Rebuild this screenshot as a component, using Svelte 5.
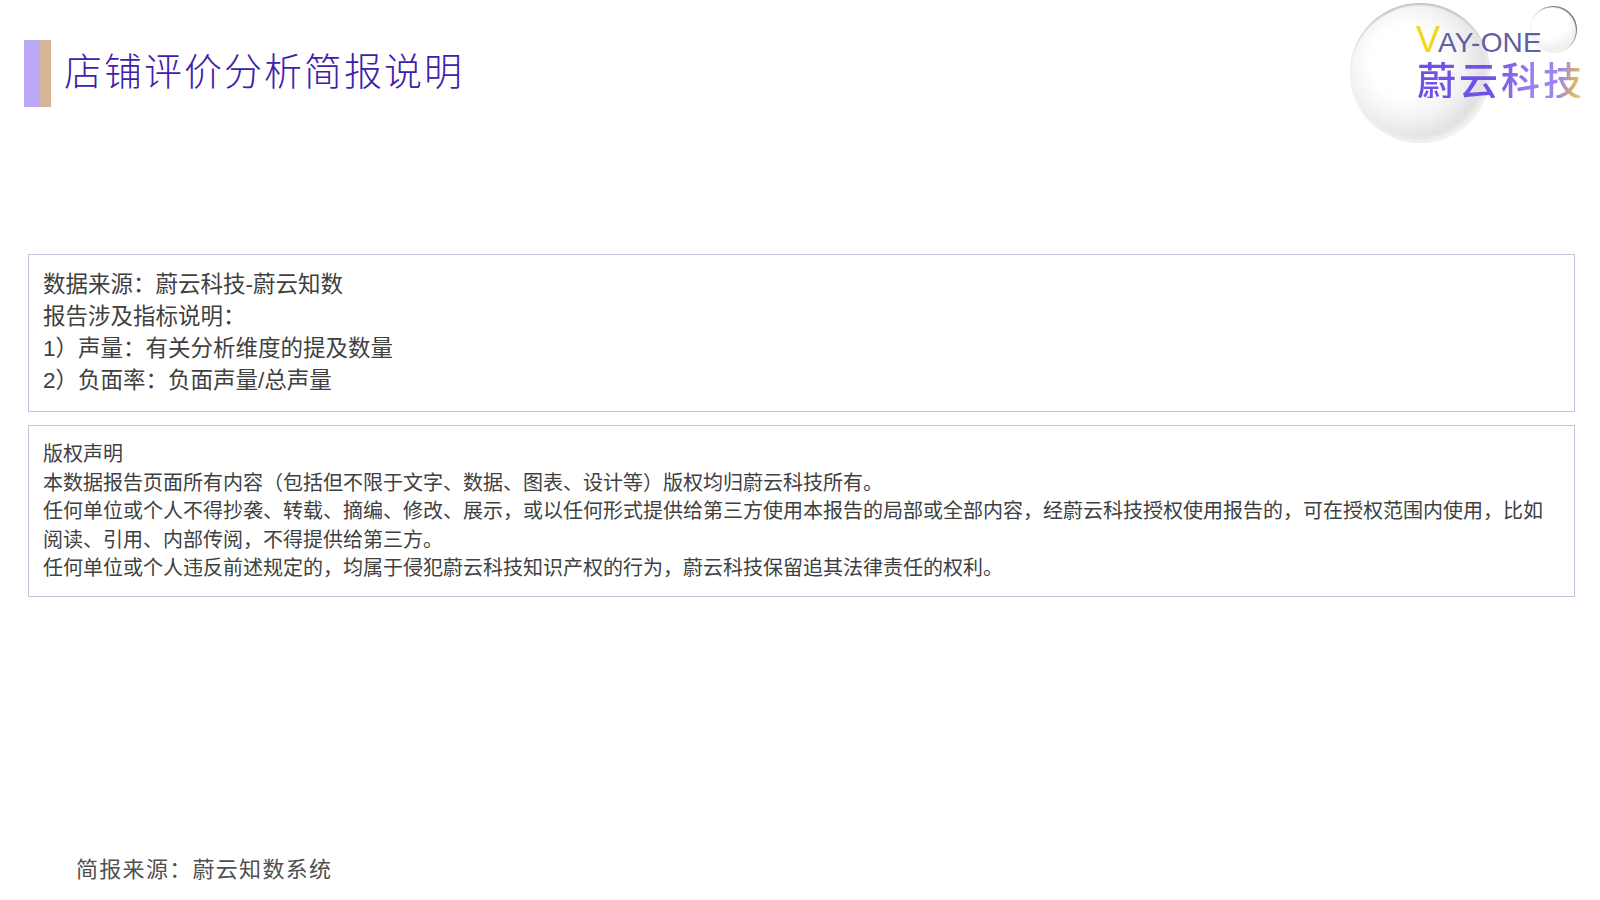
<script>
  const sourceLines = [
    "数据来源：蔚云科技-蔚云知数",
    "报告涉及指标说明：",
    "1）声量：有关分析维度的提及数量",
    "2）负面率：负面声量/总声量",
  ];

  const copyrightLines = [
    "版权声明",
    "本数据报告页面所有内容（包括但不限于文字、数据、图表、设计等）版权均归蔚云科技所有。",
    "任何单位或个人不得抄袭、转载、摘编、修改、展示，或以任何形式提供给第三方使用本报告的局部或全部内容，经蔚云科技授权使用报告的，可在授权范围内使用，比如阅读、引用、内部传阅，不得提供给第三方。",
    "任何单位或个人违反前述规定的，均属于侵犯蔚云科技知识产权的行为，蔚云科技保留追其法律责任的权利。",
  ];
</script>

<div class="page">
  <header class="header">
    <div class="title-wrap">
      <div class="marker"></div>
      <h1 class="title">店铺评价分析简报说明</h1>
    </div>
    <div class="logo">
      <div class="ball big"></div>
      <div class="ball small"></div>
      <div class="logo-en"><span class="v">V</span>AY-ONE</div>
      <div class="logo-cn">蔚云科技</div>
    </div>
  </header>

  <section class="box source">
    {#each sourceLines as line}
      <p>{line}</p>
    {/each}
  </section>

  <section class="box copyright">
    {#each copyrightLines as line}
      <p>{line}</p>
    {/each}
  </section>

  <footer class="footer">简报来源：蔚云知数系统</footer>
</div>

<style>
  :global(body) {
    margin: 0;
    background: #fff;
  }

  .page {
    display: flex;
    flex-direction: column;
    box-sizing: border-box;
    width: 1600px;
    height: 900px;
    padding: 40px 25px 0 28px;
    overflow: hidden;
    font-family: "Liberation Sans", "Noto Sans CJK SC", sans-serif;
    color: #404040;
  }

  .header {
    position: relative;
    height: 67px;
  }

  .title-wrap {
    display: flex;
    align-items: center;
    margin-left: -4px;
  }

  .marker {
    width: 27px;
    height: 67px;
    background: linear-gradient(to right, #bba8f6 0 16px, #d5b595 16px);
  }

  .title {
    margin: -10px 0 0 13px;
    font-family: "Noto Sans CJK SC", sans-serif;
    font-size: 38px;
    font-weight: 300;
    letter-spacing: 2px;
    line-height: 67px;
    color: #3f20ad;
  }

  .logo {
    position: absolute;
    top: -40px;
    right: -25px;
    width: 250px;
    height: 145px;
  }

  .ball {
    position: absolute;
    border-radius: 50%;
  }

  .big {
    left: 0;
    top: 3px;
    width: 140px;
    height: 140px;
    background: radial-gradient(circle at 40% 42%, #fff 0 30%, #f2f2f2 50%, #d8d8d8 76%, #c4c4c4 100%);
    box-shadow:
      inset 0 3px 2px -1px #c0c0c0,
      inset -3px -4px 5px #f4f4f4;
  }

  .small {
    left: 180px;
    top: 6px;
    width: 47px;
    height: 47px;
    background: radial-gradient(circle at 42% 30%, #fff 0 42%, #f0f0f0 68%, #dcdcdc 100%);
    box-shadow:
      inset -1px 1px 1px #6c6c7c,
      inset 0 -2px 2px #f4f4f4;
  }

  .logo-en {
    position: absolute;
    left: 66px;
    top: 25px;
    font-size: 28px;
    line-height: 30px;
    letter-spacing: 0.2px;
    color: #5f5fa3;
    white-space: nowrap;
  }

  .v {
    color: #f5d60e;
    font-size: 36px;
    line-height: 30px;
    letter-spacing: -2px;
  }

  .logo-cn {
    position: absolute;
    left: 67px;
    top: 58px;
    font-family: "Noto Sans CJK SC", sans-serif;
    font-size: 39px;
    font-weight: 500;
    line-height: 40px;
    letter-spacing: 3px;
    white-space: nowrap;
    color: transparent;
    background: linear-gradient(100deg, #7152e6 0 45%, #9d85ee 70%, #9d85ee 84%, #d9ae6c 92%, #f3d98c 100%);
    background-clip: text;
    -webkit-background-clip: text;
  }

  .box {
    border: 1px solid #c4c3dd;
    padding: 13px 14px;
  }

  .box p {
    margin: 0;
  }

  .source {
    margin-top: 147px;
    padding-top: 14px;
    padding-bottom: 14px;
    font-size: 22.5px;
    line-height: 32px;
  }

  .copyright {
    margin-top: 13px;
    padding-top: 14px;
    font-size: 20px;
    line-height: 28.6px;
  }

  .footer {
    margin-top: auto;
    padding: 0 0 14px 48px;
    font-size: 22px;
    line-height: 32px;
    letter-spacing: 1.3px;
    color: #505050;
  }
</style>
